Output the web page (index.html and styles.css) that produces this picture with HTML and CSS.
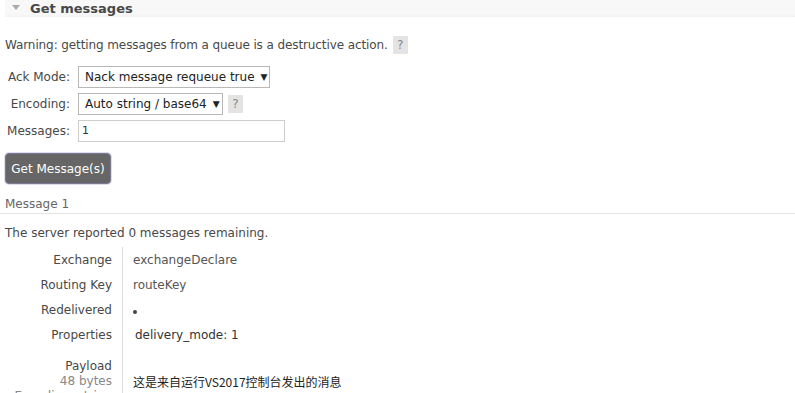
FILE: index.html
```html
<!DOCTYPE html>
<html lang="en">
<head>
    <meta charset="UTF-8">
    <title>Get messages</title>
    <link rel="stylesheet" href="styles.css">
</head>
<body>
    <div class="section">
        <h2 class="section-head"><span class="arrow"></span>Get messages</h2>
        <div class="section-body">
            <p class="warn">Warning: getting messages from a queue is a destructive action. <span class="help">?</span></p>
            <div class="form">
                <label>Ack Mode:</label>
                <div class="field">
                    <span class="select wide">Nack message requeue true <i>&#9660;</i></span>
                </div>
                <label>Encoding:</label>
                <div class="field">
                    <span class="select">Auto string / base64 <i>&#9660;</i></span>
                    <span class="help">?</span>
                </div>
                <label>Messages:</label>
                <div class="field">
                    <span class="input">1</span>
                </div>
            </div>
            <button class="btn">Get Message(s)</button>
            <h3 class="msg-title">Message 1</h3>
            <p class="remaining">The server reported 0 messages remaining.</p>
            <table class="facts">
                <tr><th>Exchange</th><td>exchangeDeclare</td></tr>
                <tr><th>Routing Key</th><td>routeKey</td></tr>
                <tr><th>Redelivered</th><td><span class="dot"></span></td></tr>
                <tr><th>Properties</th><td class="props">delivery_mode: 1</td></tr>
                <tr class="payload">
                    <th>Payload<br><sub>48 bytes</sub><br><sub>Encoding: string</sub></th>
                    <td>这是来自运行VS2017控制台发出的消息</td>
                </tr>
            </table>
        </div>
    </div>
</body>
</html>
```

FILE: styles.css
```css
body {
    margin: 0;
    font-family: "DejaVu Sans", Verdana, sans-serif;
    font-size: 12px;
    color: #484848;
    background: #fff;
    overflow: hidden;
}

.section {
    padding-left: 5px;
}

.section-head {
    margin: 0;
    height: 17px;
    line-height: 13px;
    background: linear-gradient(#f8f8f8 80%, #f2f2f2);
    font-size: 13px;
    font-weight: bold;
    color: #484848;
    display: flex;
    align-items: center;
}

.arrow {
    width: 0;
    height: 0;
    border-left: 4px solid transparent;
    border-right: 4px solid transparent;
    border-top: 5px solid #aaa;
    margin: 0 10px 2px 7px;
}

.section-body {
    padding-top: 19px;
}

.warn {
    margin: 0 0 12px;
    line-height: 18px;
    display: flex;
    align-items: center;
    letter-spacing: -0.1px;
}

.help {
    display: inline-block;
    width: 15px;
    height: 18px;
    line-height: 18px;
    text-align: center;
    background: #e4e4e4;
    color: #888;
    margin-left: 5px;
    font-size: 12px;
    letter-spacing: 0;
}

.form {
    display: grid;
    grid-template-columns: 65px auto;
    column-gap: 8px;
    row-gap: 5px;
    align-items: center;
}

.form label {
    text-align: right;
    color: #484848;
}

.field {
    display: flex;
    align-items: center;
}

.select {
    box-sizing: border-box;
    height: 22px;
    border: 1px solid #b8b8b8;
    padding: 0 6px;
    display: flex;
    align-items: center;
    gap: 6px;
    color: #222;
    font-size: 12px;
    width: 145px;
    justify-content: space-between;
    white-space: nowrap;
}

.select.wide {
    width: 192px;
}

.select i {
    font-style: normal;
    font-size: 9px;
}

.input {
    box-sizing: border-box;
    width: 207px;
    height: 22px;
    border: 1px solid #ccc;
    padding: 0 3px;
    line-height: 20px;
    font-size: 11px;
    color: #333;
}

.btn {
    margin-top: 11px;
    width: 106px;
    height: 31px;
    border: 1px solid #7a7a92;
    border-radius: 4px;
    background: #666;
    color: #fff;
    font-family: inherit;
    font-size: 12px;
    padding: 0;
    box-shadow: 0 0 0 1px #dde;
}

.msg-title {
    margin: 13px 0 0 -5px;
    padding: 0 0 2px 5px;
    font-size: 12px;
    font-weight: normal;
    color: #666;
    border-bottom: 1px solid #e4e4e4;
}

.remaining {
    margin: 12px 0 7px;
}

.facts {
    border-collapse: collapse;
}

.facts th {
    width: 107px;
    text-align: right;
    font-weight: normal;
    color: #484848;
    padding: 0 10px 0 0;
    height: 25px;
    border-right: 1px solid #ddd;
    vertical-align: middle;
}

.facts td {
    padding: 0 0 0 10px;
    color: #555;
}

.facts .props {
    padding-left: 12px;
    color: #333;
}

.dot {
    display: inline-block;
    width: 4px;
    height: 4px;
    border-radius: 50%;
    background: #444;
    margin-top: 3px;
}

.facts .payload th {
    padding-top: 12px;
    line-height: 15px;
    vertical-align: top;
}

.payload sub {
    color: #888;
    font-size: 12px;
    vertical-align: baseline;
}

.payload td {
    padding-top: 26px;
    vertical-align: top;
    font-family: "Noto Sans CJK SC", sans-serif;
    color: #222;
}
```
